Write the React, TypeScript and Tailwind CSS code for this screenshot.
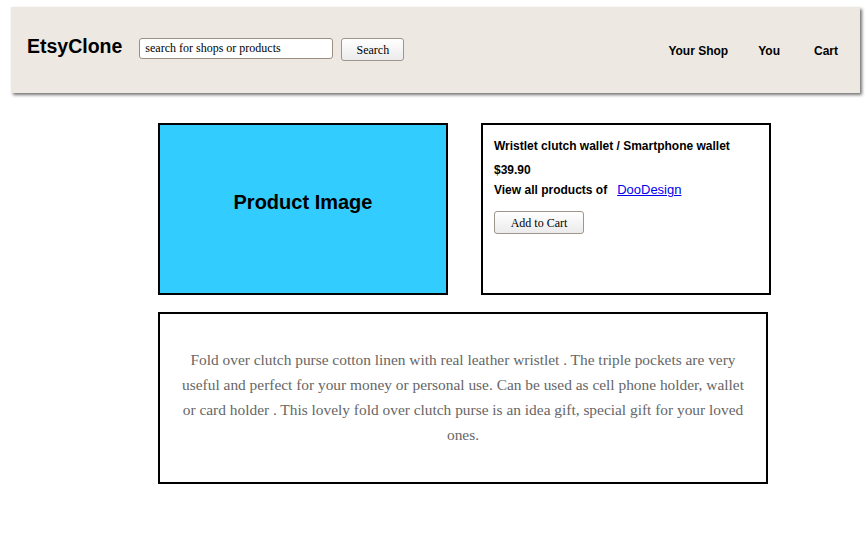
export default function App() {
  return (
    <div className="w-[868px] h-[543px] bg-white relative" style={{ fontFamily: '"Liberation Sans", Arial, sans-serif' }}>
      <div className="pt-[7px] pl-[11px] pr-[8px]">
        <header className="h-[86px] bg-[#ede9e2] flex items-center shadow-[2px_2px_3px_rgba(0,0,0,0.55)]">
          <div className="ml-[16px] text-[19.5px] font-bold text-black leading-none -mt-[6px]">EtsyClone</div>
          <input
            readOnly
            value="search for shops or products"
            className="ml-[17px] w-[194px] h-[21px] bg-white border border-[#9a8f80] rounded-[3px] px-[5px] text-[12px] text-black -mt-[4px] outline-none"
            style={{ fontFamily: '"Liberation Serif", "Times New Roman", serif' }}
          />
          <button
            className="ml-[8px] w-[63px] h-[23px] rounded-[3px] border border-[#a0958a] bg-gradient-to-b from-white to-[#ebebeb] text-[12px] text-black -mt-[1px]"
            style={{ fontFamily: '"Liberation Serif", "Times New Roman", serif' }}
          >
            Search
          </button>
          <nav className="ml-auto mr-[22px] flex items-center text-[12px] font-bold text-black mt-[1px]">
            <span>Your Shop</span>
            <span className="ml-[30px]">You</span>
            <span className="ml-[34px]">Cart</span>
          </nav>
        </header>
      </div>

      <div className="ml-[158px] mt-[30px] flex flex-col gap-[17px]">
        <div className="flex gap-[33px]">
          <div className="w-[290px] h-[172px] bg-[#33ccff] border-2 border-black flex items-center justify-center">
            <span className="text-[20px] font-bold text-black -mt-[14px]">Product Image</span>
          </div>
          <div className="w-[290px] h-[172px] border-2 border-black px-[11px] pt-[14px]">
            <div className="text-[12px] font-bold text-black leading-[14px]">Wristlet clutch wallet / Smartphone wallet</div>
            <div className="mt-[10px] text-[12px] font-bold text-black leading-[14px]">$39.90</div>
            <div className="mt-[5px] flex items-baseline leading-[15px]">
              <span className="font-bold text-black text-[12px]">View all products of</span>
              <a className="ml-[10px] text-[13px] text-[#0000ee] underline" href="#">DooDesign</a>
            </div>
            <button
              className="mt-[13px] w-[90px] h-[23px] rounded-[3px] border border-[#a0958a] bg-gradient-to-b from-white to-[#ebebeb] text-[12px] text-black"
              style={{ fontFamily: '"Liberation Serif", "Times New Roman", serif' }}
            >
              Add to Cart
            </button>
          </div>
        </div>
        <div className="w-[610px] h-[172px] border-2 border-black flex items-center justify-center px-[20px]">
          <p
            className="text-center text-[15.4px] leading-[25px] text-[#666] -mt-[3px]"
            style={{ fontFamily: '"Liberation Serif", Georgia, serif' }}
          >
            Fold over clutch purse cotton linen with real leather wristlet . The triple pockets are very useful and perfect for your money or personal use. Can be used as cell phone holder, wallet or card holder . This lovely fold over clutch purse is an idea gift, special gift for your loved ones.
          </p>
        </div>
      </div>
    </div>
  );
}
